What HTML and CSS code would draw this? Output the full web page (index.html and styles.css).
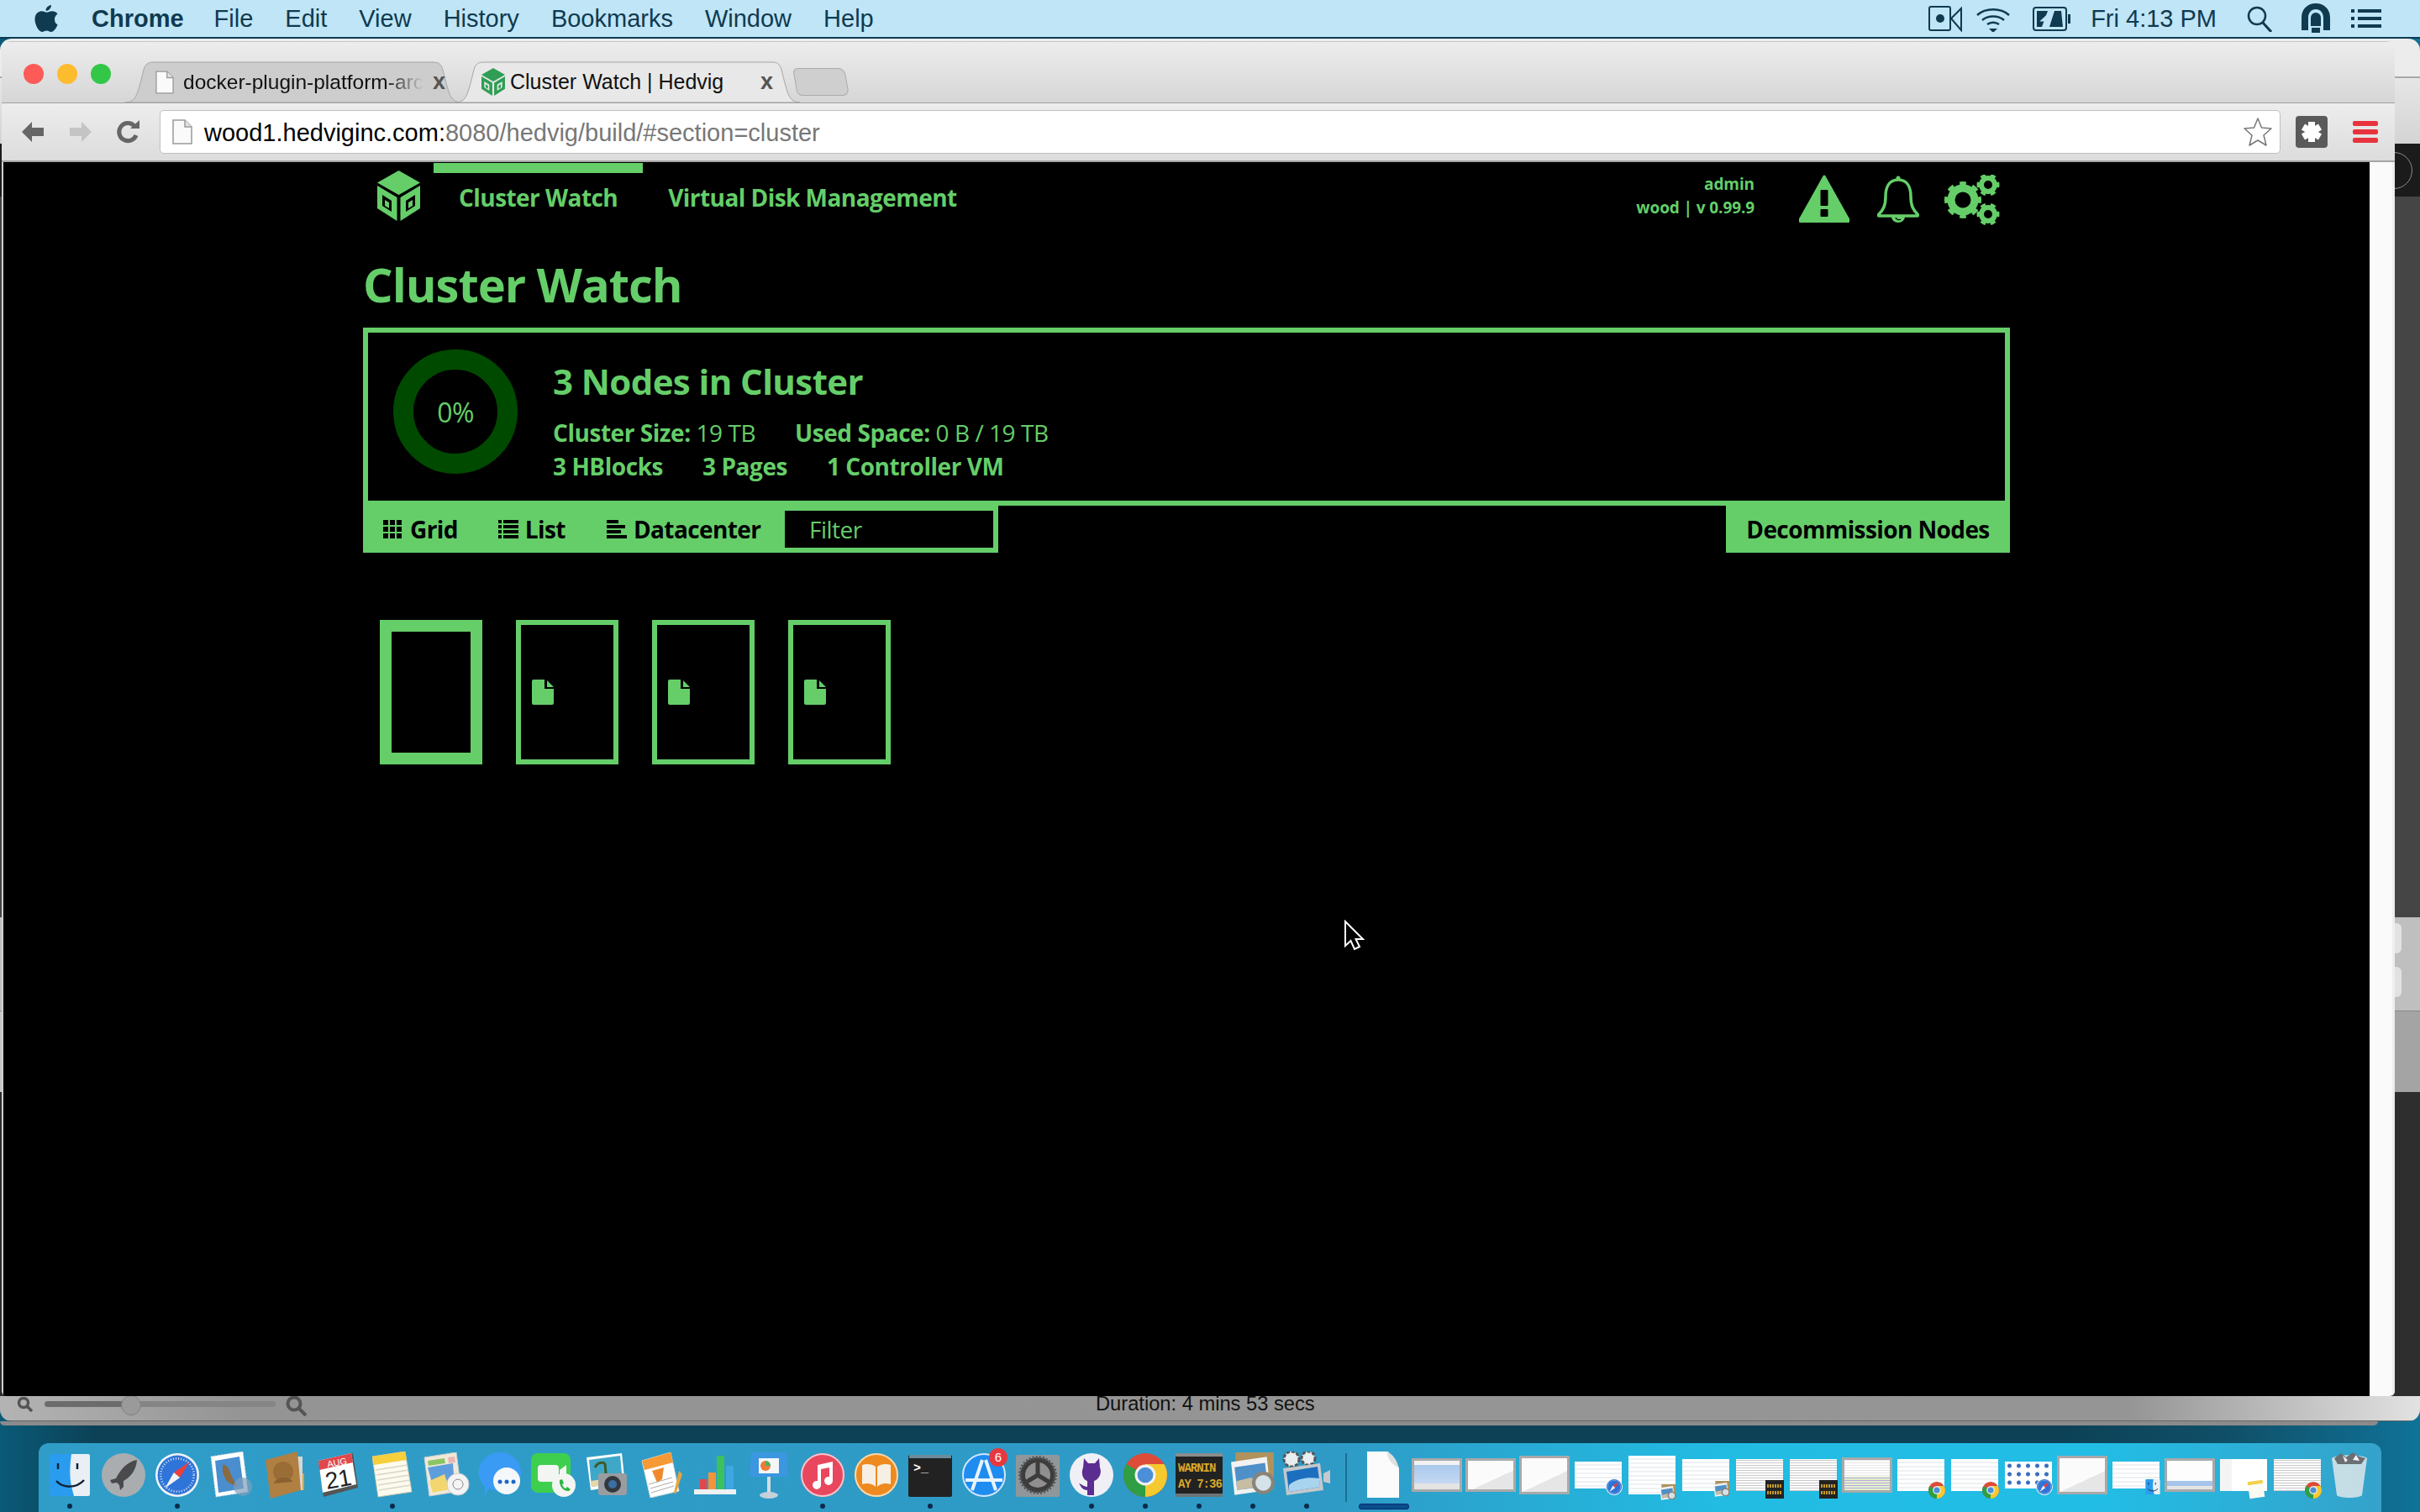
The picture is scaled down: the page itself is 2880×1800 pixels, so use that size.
FILE: index.html
```html
<!DOCTYPE html>
<html lang="en">

<head>
    <meta charset="UTF-8">
    <title>Cluster Watch | Hedvig</title>
    <link rel="stylesheet" href="styles.css">
</head>

<body>
    <!-- shared icons -->
    <svg class="defs" width="0" height="0">
        <symbol id="hedvig" viewBox="0 0 51 60">
            <path d="M25.5 0L51 14.5 25.5 29 0 14.5z" />
            <path fill-rule="evenodd" d="M0 18L23.5 32V60L0 45zM6 29V42L17 49V36z" />
            <path fill-rule="evenodd" d="M51 18L27.5 32V60L51 45zM45 29V42L34 49V36z" />
            <path d="M9 35L14 38V45L9 42zM42 35L37 38V45L42 42z" />
        </symbol>
        <symbol id="page" viewBox="0 0 24 30">
            <path d="M1 1H15L23 9V29H1z" fill="#fafafa" stroke="#9a9a9a" stroke-width="1.5" />
            <path d="M15 1V9H23" fill="#e4e4e4" stroke="#9a9a9a" stroke-width="1.5" />
        </symbol>
        <symbol id="chrome" viewBox="0 0 50 50">
            <circle cx="25" cy="25" r="25" fill="#dd4b39" />
            <path d="M25 25L3.4 12.5A25 25 0 0 0 25 50z" fill="#2f9e44" />
            <path d="M25 25V50A25 25 0 0 0 46.6 12.5H25z" fill="#f6c92f" />
            <circle cx="25" cy="25" r="12" fill="#f1f1f1" />
            <circle cx="25" cy="25" r="9" fill="#4c8fd8" />
        </symbol>
        <symbol id="safari" viewBox="0 0 50 50">
            <circle cx="25" cy="25" r="25" fill="#eef3f7" />
            <circle cx="25" cy="25" r="22.5" fill="#2f74d8" />
            <circle cx="25" cy="25" r="19" fill="none" stroke="#cfe2f8" stroke-width="2.5" stroke-dasharray="1 2" />
            <path d="M39 10L21 22 28 28z" fill="#ef3e3a" />
            <path d="M11 40L21 22 28 28z" fill="#f4f4f4" />
        </symbol>
        <symbol id="finder" viewBox="0 0 50 52">
            <rect x="1" y="1" width="48" height="50" rx="2" fill="#2a9cf0" />
            <path d="M27 1H47a2 2 0 0 1 2 2V49a2 2 0 0 1-2 2H30C27 38 23 30 27 1z" fill="#e9eff4" />
            <path d="M11 12V19M34 12V19" stroke="#123" stroke-width="2.5" />
            <path d="M9 33C17 42 33 42 42 32" fill="none" stroke="#123" stroke-width="2.5" />
        </symbol>
        <symbol id="preview" viewBox="0 0 52 54">
            <rect x="6" y="1" width="44" height="42" fill="#b0925c" />
            <path d="M1 12L42 6 46 44 5 50z" fill="#f2f2f2" />
            <path d="M5 18L40 13 43 40 8 44z" fill="#4f90c8" />
            <path d="M7 34L24 30 40 40 8 44z" fill="#c6bda4" />
            <circle cx="38" cy="36" r="13" fill="#8a8478" />
            <circle cx="38" cy="36" r="9" fill="#d6e2ea" />
        </symbol>
        <symbol id="console-mini" viewBox="0 0 22 22">
            <rect width="22" height="22" fill="#222" />
            <path d="M2 7H20M2 15H20" stroke="#c89a2a" stroke-width="4" stroke-dasharray="2 1" />
        </symbol>
    </svg>

    <div class="screen">

        <header class="menubar">
            <nav class="menu-left">
                <svg class="apple" width="30" height="32" viewBox="0 0 30 32">
                    <path d="M21 0c.3 3-2.8 7-6.4 6.8C14.200 3.600 17.600.3 21 0zM25 17c0-3.400 2-5.300 3.600-6.500C27 8 24 7.200 22 7.200c-2.500 0-4.700 1.500-6.200 1.500S11.800 7.200 9.500 7.200C5.500 7.300 1.500 10.500 1.500 17c0 6.500 4.700 15 8.500 15 1.800 0 3.300-1.400 5.500-1.400s3.400 1.400 5.500 1.400c3.300 0 6.500-5.500 7.500-8.700-2.300-1-3.500-3.200-3.500-6.300z" />
                </svg>
                <span class="menu-app">Chrome</span>
                <span>File</span>
                <span>Edit</span>
                <span>View</span>
                <span>History</span>
                <span>Bookmarks</span>
                <span>Window</span>
                <span>Help</span>
            </nav>
            <div class="menu-right">
                <svg class="status-camera" width="40" height="32" viewBox="0 0 40 32">
                    <rect x="1" y="2" width="25" height="28" rx="2" fill="none" stroke="#0f3a50" stroke-width="2" />
                    <circle cx="14" cy="16" r="5" fill="#0f3a50" />
                    <path d="M27 16L39 4V30z" fill="none" stroke="#0f3a50" stroke-width="2" />
                </svg>
                <svg class="status-wifi" width="42" height="32" viewBox="0 0 42 32">
                    <path d="M2 12C12 3 30 3 40 12M8 18C15 12 27 12 34 18M14 23C18 20 24 20 28 23" fill="none" stroke="#0f3a50" stroke-width="2.500" />
                    <path d="M16 28H26L21 33z" fill="#0f3a50" />
                </svg>
                <svg class="status-battery" width="46" height="32" viewBox="0 0 46 32">
                    <rect x="1" y="3" width="39" height="27" rx="3" fill="none" stroke="#0f3a50" stroke-width="2" />
                    <path d="M5 7H18L11 26H5zM34 7H26L20 26H36z" fill="#0f3a50" />
                    <path d="M26 5L12 18H20L16 28" fill="none" stroke="#bfe5f6" stroke-width="3" />
                    <rect x="42" y="11" width="3" height="11" fill="#0f3a50" />
                </svg>
                <span class="clock">Fri 4:13 PM</span>
                <svg class="status-search" width="30" height="32" viewBox="0 0 30 32">
                    <circle cx="12" cy="13" r="10" fill="none" stroke="#0f3a50" stroke-width="2.500" />
                    <path d="M19 21L29 32" stroke="#0f3a50" stroke-width="3" />
                </svg>
                <svg class="status-tunnel" width="34" height="36" viewBox="0 0 34 36">
                    <path fill-rule="evenodd" d="M0 32V17C0 6 8 0 17 0s17 6 17 17V32H26V17C26 11 22 7 17 7S8 11 8 17V32z" fill="#0f3a50" />
                    <path d="M11 27V17a6 6 0 0 1 12 0V27z" fill="#0f3a50" />
                    <rect x="12" y="29" width="10" height="6" fill="#0f3a50" />
                </svg>
                <svg class="status-list" width="36" height="28" viewBox="0 0 36 28">
                    <path d="M0 3H4V7H0zM8 3H36V7H8zM0 12H4V16H0zM8 12H36V16H8zM0 21H4V25H0zM8 21H36V25H8z" fill="#0f3a50" />
                </svg>
            </div>
        </header>

        <div class="desktop">

            <!-- window behind the browser -->
            <div class="backwin">
                <div class="band band-title"></div>
                <div class="band band-tools"></div>
                <div class="band band-dark"><span class="ring"></span></div>
                <div class="band band-grey"></div>
                <div class="band band-pills"><span class="pill"></span><span class="pill"></span></div>
                <div class="band band-light"></div>
                <div class="band band-deep"></div>
                <div class="backwin-foot">
                    <svg class="zoom-small" width="20" height="18" viewBox="0 0 20 18">
                        <circle cx="8" cy="7" r="5.500" fill="none" stroke="#555" stroke-width="3.500" />
                        <path d="M12 11L18 17" stroke="#555" stroke-width="3.500" />
                    </svg>
                    <div class="slider"><span class="slider-knob"></span></div>
                    <svg class="zoom-big" width="26" height="24" viewBox="0 0 26 24">
                        <circle cx="10" cy="9" r="7.500" fill="none" stroke="#555" stroke-width="4" />
                        <path d="M16 15L24 23" stroke="#555" stroke-width="4" />
                    </svg>
                    <span class="duration">Duration: 4 mins 53 secs</span>
                </div>
            </div>
            <div class="backwin-edge"></div>

            <!-- browser -->
            <div class="browser">
                <div class="titlebar">
                    <div class="lights">
                        <span class="light light-red"></span>
                        <span class="light light-yellow"></span>
                        <span class="light light-green"></span>
                    </div>
                    <div class="tabs">
                        <div class="tab tab-back">
                            <svg class="tab-shape" viewBox="0 0 400 49" preserveAspectRatio="none">
                                <path d="M0 49C12 49 14 40 18 26L22 10C24 3 27 1 34 1H366C373 1 376 3 378 10L382 26C386 40 388 49 400 49z" fill="#cdcdcd" stroke="#a6a6a6" />
                            </svg>
                            <svg class="tab-icon" width="22" height="28"><use href="#page" /></svg>
                            <span class="tab-label tab-label-fade">docker-plugin-platform-arc</span>
                            <span class="tab-close">x</span>
                        </div>
                        <div class="tab tab-active">
                            <svg class="tab-shape" viewBox="0 0 410 49" preserveAspectRatio="none">
                                <path d="M0 49C12 49 14 40 18 26L22 10C24 3 27 1 34 1H376C383 1 386 3 388 10L392 26C396 40 398 49 410 49z" fill="#e8e8e8" stroke="#a6a6a6" />
                            </svg>
                            <svg class="tab-favicon" width="28" height="33"><use href="#hedvig" /></svg>
                            <span class="tab-label">Cluster Watch | Hedvig</span>
                            <span class="tab-close">x</span>
                        </div>
                        <span class="tab-new"></span>
                    </div>
                </div>

                <div class="toolbar">
                    <svg class="nav-btn" width="30" height="30" viewBox="0 0 30 30">
                        <path d="M14 3L2 15 14 27V20H28V10H14z" fill="#666" />
                    </svg>
                    <svg class="nav-btn" width="30" height="30" viewBox="0 0 30 30">
                        <path d="M16 3L28 15 16 27V20H2V10H16z" fill="#c4c4c4" />
                    </svg>
                    <svg class="nav-btn" width="30" height="30" viewBox="0 0 30 30">
                        <path d="M24 19A10.500 10.500 0 1 1 22 8" fill="none" stroke="#666" stroke-width="5" />
                        <path d="M17 11H28V1z" fill="#666" />
                    </svg>
                    <div class="urlbar">
                        <svg class="url-icon" width="24" height="30"><use href="#page" /></svg>
                        <span class="url"><span class="url-host">wood1.hedviginc.com:</span>8080/hedvig/build/#section=cluster</span>
                        <svg class="url-star" width="36" height="36" viewBox="0 0 36 36">
                            <path d="M18 2L22.500 13 34 14 25 22 28 34 18 28 8 34 11 22 2 14 13.500 13z" fill="#fff" stroke="#777" stroke-width="1.500" stroke-linejoin="round" />
                        </svg>
                    </div>
                    <span class="ext-btn">
                        <svg width="26" height="28" viewBox="0 0 26 28">
                            <path d="M13 2V26M3 8L23 20M23 8L3 20" stroke="#fff" stroke-width="8" />
                        </svg>
                    </span>
                    <span class="menu-btn"><i></i><i></i><i></i></span>
                </div>

                <div class="content">
                    <div class="viewport">
                        <div class="app">
                            <div class="topnav">
                                <svg class="logo" width="51" height="60"><use href="#hedvig" /></svg>
                                <a class="nav-item nav-item-active">Cluster Watch</a>
                                <a class="nav-item">Virtual Disk Management</a>
                                <div class="nav-right">
                                    <div class="user-info">
                                        <div>admin</div>
                                        <div>wood | v 0.99.9</div>
                                    </div>
                                    <svg class="alert-icon" width="60" height="57" viewBox="0 0 60 57">
                                        <path d="M30 2L58 52a3 3 0 0 1-3 5H5a3 3 0 0 1-3-5z" stroke="#65ce69" stroke-width="3" stroke-linejoin="round" fill="#65ce69" />
                                        <rect x="25.500" y="18" width="9" height="19" rx="1" fill="#000" />
                                        <rect x="25.500" y="41" width="9" height="9" rx="1" fill="#000" />
                                    </svg>
                                    <svg class="bell-icon" width="50" height="56" viewBox="0 0 50 56">
                                        <circle cx="25" cy="3" r="2.500" fill="#65ce69" />
                                        <path d="M25 5C14 5 10 14 10 25C10 36 7 41 2 46Q0 48 3 48H47Q50 48 48 46C43 41 40 36 40 25C40 14 36 5 25 5z" fill="none" stroke="#65ce69" stroke-width="3.500" />
                                        <path d="M17 49a8 7 0 0 0 16 0z" fill="#65ce69" />
                                        <path d="M22 50a4 4 0 0 0 6 2" fill="none" stroke="#000" stroke-width="1.200" />
                                    </svg>
                                    <svg class="gears-icon" width="66" height="60" viewBox="0 0 66 60">
                                        <g fill="none" stroke="#65ce69">
                                            <circle cx="22" cy="30" r="14" stroke-width="9" />
                                            <circle cx="22" cy="30" r="19" stroke-width="6" pathLength="80" stroke-dasharray="5 5" stroke-dashoffset="2.500" />
                                            <circle cx="52" cy="12" r="8" stroke-width="6" />
                                            <circle cx="52" cy="12" r="11.500" stroke-width="4" pathLength="60" stroke-dasharray="5 5" stroke-dashoffset="2.500" />
                                            <circle cx="52" cy="47" r="8" stroke-width="6" />
                                            <circle cx="52" cy="47" r="11.500" stroke-width="4" pathLength="60" stroke-dasharray="5 5" stroke-dashoffset="2.500" />
                                        </g>
                                    </svg>
                                </div>
                            </div>

                            <h1>Cluster Watch</h1>

                            <section class="summary">
                                <div class="donut">0%</div>
                                <div class="summary-text">
                                    <h2>3 Nodes in Cluster</h2>
                                    <div class="stat-row">
                                        <span><b>Cluster Size:</b> 19 TB</span>
                                        <span><b>Used Space:</b> 0 B / 19 TB</span>
                                    </div>
                                    <div class="stat-row">
                                        <span><b>3 HBlocks</b></span>
                                        <span><b>3 Pages</b></span>
                                        <span><b>1 Controller VM</b></span>
                                    </div>
                                </div>
                            </section>

                            <div class="controls">
                                <div class="views">
                                    <a class="view-btn view-grid">
                                        <svg width="22" height="22" viewBox="0 0 22 22">
                                            <path d="M0 0H6V6H0zM8 0H14V6H8zM16 0H22V6H16zM0 8H6V14H0zM8 8H14V14H8zM16 8H22V14H16zM0 16H6V22H0zM8 16H14V22H8zM16 16H22V22H16z" />
                                        </svg>
                                        Grid
                                    </a>
                                    <a class="view-btn view-list">
                                        <svg width="24" height="22" viewBox="0 0 24 22">
                                            <path d="M0 0H4V4H0zM6 0H24V4H6zM0 6H4V10H0zM6 6H24V10H6zM0 12H4V16H0zM6 12H24V16H6zM0 18H4V22H0zM6 18H24V22H6z" />
                                        </svg>
                                        List
                                    </a>
                                    <a class="view-btn view-dc">
                                        <svg width="24" height="22" viewBox="0 0 24 22">
                                            <path d="M0 0H14V4H0zM0 6H22V10H0zM0 12H17V16H0zM0 18H24V22H0z" />
                                        </svg>
                                        Datacenter
                                    </a>
                                    <input class="filter" type="text" placeholder="Filter">
                                </div>
                                <a class="decommission">Decommission Nodes</a>
                            </div>

                            <div class="tiles">
                                <div class="tile tile-selected"></div>
                                <div class="tile">
                                    <svg class="file-icon" width="26" height="30" viewBox="0 0 26 30"><path d="M2 0H15V11H26V28a2 2 0 0 1-2 2H2a2 2 0 0 1-2-2V2a2 2 0 0 1 2-2zM18 1L26 9H18z" /></svg>
                                </div>
                                <div class="tile">
                                    <svg class="file-icon" width="26" height="30" viewBox="0 0 26 30"><path d="M2 0H15V11H26V28a2 2 0 0 1-2 2H2a2 2 0 0 1-2-2V2a2 2 0 0 1 2-2zM18 1L26 9H18z" /></svg>
                                </div>
                                <div class="tile">
                                    <svg class="file-icon" width="26" height="30" viewBox="0 0 26 30"><path d="M2 0H15V11H26V28a2 2 0 0 1-2 2H2a2 2 0 0 1-2-2V2a2 2 0 0 1 2-2zM18 1L26 9H18z" /></svg>
                                </div>
                            </div>
                        </div>
                    </div>
                    <div class="scrollbar"></div>
                </div>
            </div>

            <!-- mouse pointer -->
            <svg class="pointer" width="26" height="38" viewBox="0 0 26 38">
                <path d="M2 2V31L8.500 25 13 35 19 32 14.500 23H23z" fill="#000" stroke="#fff" stroke-width="2" />
            </svg>
        </div>

        <footer class="dock">
            <div class="slot is-running">
                <svg width="50" height="52"><use href="#finder" /></svg>
            </div>
            <div class="slot">
                <svg width="52" height="52" viewBox="0 0 52 52">
                    <circle cx="26" cy="26" r="26" fill="#a9adb0" />
                    <path d="M42 8C30 10 22 20 17 30L10 32 12 36 18 35 21 38 22 44 26 40 26 33C35 28 41 20 42 8z" fill="#4a4a4c" />
                </svg>
            </div>
            <div class="slot is-running">
                <svg width="52" height="52"><use href="#safari" /></svg>
            </div>
            <div class="slot">
                <svg width="52" height="56" viewBox="0 0 52 56">
                    <path d="M2 6L40 0 46 48 8 54z" fill="#fff" stroke="#d8d8d8" stroke-dasharray="2 2" />
                    <path d="M7 11L36 6 41 44 11 49z" fill="#4a8ed0" />
                    <path d="M16 16C22 15 24 22 26 28L33 42 25 38C20 36 18 30 16 24z" fill="#8a6a3e" />
                    <circle cx="40" cy="42" r="11" fill="#7f9fbc" opacity=".7" />
                </svg>
            </div>
            <div class="slot">
                <svg width="50" height="56" viewBox="0 0 50 56">
                    <path d="M40 6H46V46H40z" fill="#d6d6d6" />
                    <path d="M46 26H48V46H46z" fill="#e6a020" />
                    <path d="M2 10L40 0 44 46 8 56z" fill="#b07f42" />
                    <circle cx="23" cy="24" r="12" fill="#9a6d36" />
                    <path d="M12 38C14 29 32 29 34 36z" fill="#8a6230" />
                </svg>
            </div>
            <div class="slot">
                <svg width="50" height="54" viewBox="0 0 50 54">
                    <path d="M1 12L42 1 48 42 7 53z" fill="#555" />
                    <path d="M1 10L40 1 46 38 6 48z" fill="#fff" />
                    <path d="M1 10L40 1 42 12 2 21z" fill="#e0484c" />
                    <text class="cal-month" x="12" y="18" transform="rotate(-10 12 18)">AUG</text>
                    <text class="cal-day" x="11" y="44" transform="rotate(-10 11 44)">21</text>
                </svg>
            </div>
            <div class="slot is-running">
                <svg width="48" height="56" viewBox="0 0 48 56">
                    <path d="M0 6L39 0 47 48 7 54z" fill="#fdfbee" stroke="#c8c6b0" />
                    <path d="M0 6L39 0 41 10 2 16z" fill="#f6cf3c" />
                    <path d="M4 22L42 16M5 28L43 22M6 34L44 28M7 40L45 34M8 46L46 40" stroke="#d8d6c8" stroke-width="1.500" />
                </svg>
            </div>
            <div class="slot">
                <svg width="56" height="54" viewBox="0 0 56 54">
                    <path d="M2 6L40 0 46 46 8 52z" fill="#efe9da" stroke="#ccc" />
                    <path d="M6 10L26 7 27 13 7 16z" fill="#8cc563" />
                    <path d="M30 6L38 5 39 12 31 13z" fill="#eab5b5" />
                    <path d="M6 18L36 13 38 40H12z" fill="#5f9edc" />
                    <path d="M8 34L26 26 32 44 12 48z" fill="#f3d66e" />
                    <circle cx="42" cy="38" r="13" fill="#f4f4f4" stroke="#ccc" />
                    <circle cx="42" cy="38" r="6" fill="none" stroke="#888" />
                </svg>
            </div>
            <div class="slot">
                <svg width="52" height="54" viewBox="0 0 52 54">
                    <path d="M26 0a25 24 0 0 1 12 45L36 48C28 50 20 46 14 42L8 52C8 46 8 42 7 40A25 24 0 0 1 26 0z" fill="#3a9bf5" />
                    <circle cx="34" cy="34" r="16" fill="#f4f8fb" />
                    <circle cx="26" cy="35" r="2.500" fill="#1f66c8" />
                    <circle cx="34" cy="35" r="2.500" fill="#1f66c8" />
                    <circle cx="42" cy="35" r="2.500" fill="#1f66c8" />
                </svg>
            </div>
            <div class="slot">
                <svg width="54" height="52" viewBox="0 0 54 52">
                    <rect x="0" width="47" height="47" rx="8" fill="#3fcf4e" />
                    <rect x="8" y="14" width="25" height="20" rx="4" fill="#f2f5f2" />
                    <path d="M34 20L42 14V34L34 28z" fill="#f2f5f2" />
                    <circle cx="39" cy="38" r="14" fill="#f2f5f2" />
                    <path d="M34 32l3-1 2 5-2 1c1 3 2 4 4 5l2-2 4 3-2 2c-6 1-12-6-11-13z" fill="#2cb544" />
                </svg>
            </div>
            <div class="slot">
                <svg width="50" height="52" viewBox="0 0 50 52">
                    <path d="M0 5L42 0 46 38 5 44z" fill="#fff" />
                    <path d="M3 8L40 3 43 35 6 40z" fill="#3fa7c8" />
                    <path d="M22 12C16 10 12 13 10 17M22 12L24 36" stroke="#3b5b2a" stroke-width="3" fill="none" />
                    <path d="M5 33L42 28V35L6 40z" fill="#e6d7a8" />
                    <rect x="14" y="24" width="34" height="26" rx="3" fill="#9a9ca0" />
                    <circle cx="31" cy="37" r="10" fill="#33383e" />
                    <circle cx="31" cy="37" r="5" fill="#3b6fa5" />
                </svg>
            </div>
            <div class="slot">
                <svg width="50" height="54" viewBox="0 0 50 54">
                    <path d="M2 10L36 0 46 46 12 54z" fill="#fff" stroke="#ddd" />
                    <path d="M2 10L36 0 39 12 5 21z" fill="#f59a34" />
                    <path d="M14 22L28 18 26 32 20 36z" fill="#ee8a2d" />
                    <path d="M10 38L38 30M12 43L39 35M13 48L40 40" stroke="#aaa" />
                    <path d="M46 22L40 48 42 50 50 26z" fill="#e7a33a" />
                </svg>
            </div>
            <div class="slot">
                <svg width="52" height="50" viewBox="0 0 52 50">
                    <path d="M1 48L4 42H48L51 48z" fill="#c6cfd6" />
                    <rect x="1" y="42" width="50" height="6" fill="#eef0f2" />
                    <rect x="8" y="30" width="8" height="12" fill="#e0484c" />
                    <rect x="18" y="22" width="9" height="20" fill="#f2953a" />
                    <rect x="28" y="2" width="9" height="40" fill="#3cc25c" />
                    <rect x="39" y="14" width="9" height="28" fill="#3ea6e0" />
                </svg>
            </div>
            <div class="slot">
                <svg width="48" height="56" viewBox="0 0 48 56">
                    <path d="M3 1H45L47 30H1z" fill="#3b97e0" />
                    <rect x="12" y="8" width="24" height="18" fill="#f4f6f8" />
                    <circle cx="20" cy="17" r="6" fill="#ef7a3a" />
                    <path d="M20 17V11A6 6 0 0 1 26 17z" fill="#46b35a" />
                    <rect x="22" y="30" width="4" height="20" fill="#d6dde2" />
                    <ellipse cx="24" cy="52" rx="11" ry="4" fill="#c6d0d8" />
                </svg>
            </div>
            <div class="slot is-running">
                <svg width="52" height="52" viewBox="0 0 52 52">
                    <circle cx="26" cy="26" r="26" fill="#e9475e" />
                    <circle cx="26" cy="26" r="25" fill="none" stroke="#f2c7cd" stroke-width="2" />
                    <path d="M20 14L38 10V33a5 5 0 1 1-4-5V17L24 19V38a5 5 0 1 1-4-5z" fill="#fff" />
                </svg>
            </div>
            <div class="slot">
                <svg width="52" height="52" viewBox="0 0 52 52">
                    <circle cx="26" cy="26" r="26" fill="#ef8a1e" />
                    <circle cx="26" cy="26" r="25" fill="none" stroke="#f5d9b0" stroke-width="2" />
                    <path d="M9 14C15 12 21 13 25 16V40C21 36 15 35 9 37zM43 14C37 12 31 13 27 16V40C31 36 37 35 43 37z" fill="#f7efe4" />
                </svg>
            </div>
            <div class="slot is-running">
                <svg width="52" height="52" viewBox="0 0 52 52">
                    <rect y="2" width="52" height="50" rx="2" fill="#222" />
                    <rect x="1" y="2" width="50" height="4" fill="#6c8a98" />
                    <text class="term-text" x="6" y="22">&gt;_</text>
                </svg>
            </div>
            <div class="slot">
                <svg width="52" height="52" viewBox="0 0 52 52">
                    <circle cx="26" cy="26" r="26" fill="#1f8cf0" />
                    <circle cx="26" cy="26" r="25" fill="none" stroke="#cfe7fb" stroke-width="2" />
                    <path d="M28 8L40 44M24 8L12 44M4 32H48" stroke="#e9f4fd" stroke-width="4" />
                </svg>
                <span class="badge">6</span>
            </div>
            <div class="slot">
                <svg width="52" height="52" viewBox="0 0 52 52">
                    <rect y="2" width="52" height="50" rx="2" fill="#90979b" />
                    <circle cx="26" cy="26" r="21" fill="#3c3c3c" stroke="#555" stroke-width="4" stroke-dasharray="2 2" />
                    <circle cx="26" cy="26" r="15" fill="#8f8f8f" />
                    <path d="M26 26V11M26 26L13 34M26 26L39 34" stroke="#3c3c3c" stroke-width="5" />
                </svg>
            </div>
            <div class="slot is-running">
                <svg width="52" height="52" viewBox="0 0 52 52">
                    <circle cx="26" cy="26" r="26" fill="#f1eff6" />
                    <path d="M17 6L22 12H30L35 6 36 17C39 24 34 32 29 33V50H21V44C14 44 13 38 11 36 15 37 17 40 21 40V33C16 32 13 24 16 17z" fill="#5c2d91" />
                </svg>
            </div>
            <div class="slot is-running">
                <svg width="52" height="52"><use href="#chrome" /></svg>
            </div>
            <div class="slot is-running">
                <svg width="56" height="52" viewBox="0 0 56 52">
                    <rect width="56" height="52" rx="2" fill="#222" />
                    <rect width="56" height="4" fill="#8c8c8c" />
                    <rect y="48" width="56" height="4" fill="#6c7478" />
                    <text x="3" y="22" class="warn-text">WARNIN</text>
                    <text x="3" y="41" class="warn-text">AY 7:36</text>
                </svg>
            </div>
            <div class="slot is-running">
                <svg width="54" height="56"><use href="#preview" /></svg>
            </div>
            <div class="slot is-running">
                <svg width="60" height="56" viewBox="0 0 60 56">
                    <circle cx="12" cy="9" r="9" fill="#e8edf0" stroke="#555" stroke-dasharray="4 2" stroke-width="3" />
                    <circle cx="32" cy="8" r="8" fill="#e8edf0" stroke="#555" stroke-dasharray="4 2" stroke-width="3" />
                    <path d="M2 20L46 14 50 46 6 52z" fill="#c5c8cc" />
                    <path d="M6 24L43 18 46 42 9 48z" fill="#1c6fbf" />
                    <path d="M9 40C18 32 32 30 45 32L46 42 9 48z" fill="#a8d4ef" />
                    <path d="M50 26L58 22V38L50 36z" fill="#c5c8cc" />
                </svg>
            </div>

            <span class="dock-sep"></span>

            <div class="slot slot-doc">
                <svg width="40" height="56" viewBox="0 0 40 56">
                    <path d="M1 0H26L39 20V55H1z" fill="#fbfbfb" />
                    <path d="M24 0C26 8 28 14 39 20C36 10 32 3 24 0z" fill="#dfdfdf" />
                </svg>
            </div>
            <div class="slot"><div class="thumb thumb-win thumb-sky"></div></div>
            <div class="slot"><div class="thumb thumb-win"></div></div>
            <div class="slot"><div class="thumb thumb-win thumb-tall"></div></div>
            <div class="slot"><div class="thumb thumb-doc thumb-short"><svg class="thumb-badge" width="20" height="22"><use href="#safari" /></svg></div></div>
            <div class="slot"><div class="thumb thumb-doc thumb-tall"><svg class="thumb-badge" width="20" height="22"><use href="#preview" /></svg></div></div>
            <div class="slot"><div class="thumb thumb-doc"><svg class="thumb-badge" width="20" height="22"><use href="#preview" /></svg></div></div>
            <div class="slot"><div class="thumb thumb-doc thumb-text"><svg class="thumb-badge" width="22" height="22"><use href="#console-mini" /></svg></div></div>
            <div class="slot"><div class="thumb thumb-doc thumb-text"><svg class="thumb-badge" width="22" height="22"><use href="#console-mini" /></svg></div></div>
            <div class="slot"><div class="thumb thumb-win thumb-lilac"></div></div>
            <div class="slot"><div class="thumb thumb-doc"><svg class="thumb-badge" width="20" height="20"><use href="#chrome" /></svg></div></div>
            <div class="slot"><div class="thumb thumb-doc"><svg class="thumb-badge" width="20" height="20"><use href="#chrome" /></svg></div></div>
            <div class="slot"><div class="thumb thumb-doc thumb-short thumb-swatches"><svg class="thumb-badge" width="20" height="22"><use href="#safari" /></svg></div></div>
            <div class="slot"><div class="thumb thumb-win thumb-tall"></div></div>
            <div class="slot"><div class="thumb thumb-doc thumb-short"><svg class="thumb-badge" width="18" height="22"><use href="#finder" /></svg></div></div>
            <div class="slot"><div class="thumb thumb-win thumb-blue"></div></div>
            <div class="slot"><div class="thumb thumb-doc thumb-notes"><span class="thumb-note"></span></div></div>
            <div class="slot"><div class="thumb thumb-doc thumb-text"><svg class="thumb-badge" width="20" height="20"><use href="#chrome" /></svg></div></div>
            <div class="slot slot-trash">
                <svg width="44" height="56" viewBox="0 0 44 56">
                    <path d="M1 8C8 3 36 3 43 8L37 52C34 56 10 56 7 52z" fill="#dfe6e9" opacity=".85" />
                    <path d="M4 8L12 2 18 7 26 1 34 6 41 8 36 15H8z" fill="#6a6f73" />
                    <path d="M14 5L20 10 17 13zM30 4L34 11 26 10z" fill="#f4f4f4" />
                </svg>
            </div>
        </footer>
    </div>
</body>

</html>
```

FILE: styles.css
```css
html,
body {
    margin: 0;
    padding: 0;
    background: #000;
}

.defs {
    position: absolute;
}

.screen {
    width: 2880px;
    height: 1800px;
    display: flex;
    flex-direction: column;
    overflow: hidden;
    font-family: "Liberation Sans", Arial, sans-serif;
    background: linear-gradient(90deg, #0a5a78 0, #0c4156 4%, #0c4156 85%, #104f68 92%, #0f7398 100%);
}

/* mac menu bar */
.menubar {
    height: 44px;
    flex: none;
    display: flex;
    justify-content: space-between;
    align-items: center;
    background: #bfe5f6;
    border-bottom: 2px solid #0d3b52;
    color: #0f3a50;
    font-size: 29px;
}

.menu-left {
    display: flex;
    align-items: center;
    gap: 38px;
    padding-left: 40px;
}

.apple {
    fill: #0f3a50;
    margin-right: 1px;
}

.menu-app {
    font-weight: bold;
    margin-right: -2px;
}

.menu-right {
    display: flex;
    align-items: center;
    padding-right: 46px;
}

.status-camera {
    margin-right: 16px;
}

.status-wifi {
    margin-right: 26px;
}

.status-battery {
    margin-right: 23px;
}

.clock {
    margin-right: 36px;
}

.status-search {
    margin-right: 35px;
}

.status-tunnel {
    margin-right: 25px;
}

/* desktop windows */
.desktop {
    flex: 1;
    position: relative;
}

.backwin {
    position: absolute;
    left: 0;
    top: 0;
    width: 2880px;
    height: 1646px;
    display: flex;
    flex-direction: column;
    overflow: hidden;
    border-radius: 14px;
}

.backwin-edge {
    position: absolute;
    left: 0;
    top: 1646px;
    width: 2830px;
    height: 5px;
    background: #8b8b8b;
    border-radius: 0 0 8px 8px;
}

.band {
    flex: none;
}

.band-title {
    height: 45px;
    background: #ececec;
    border-bottom: 2px solid #a8a8a8;
}

.band-tools {
    height: 78px;
    background: linear-gradient(#e6e6e6, #d4d4d4);
}

.band-dark {
    height: 63px;
    background: #1b1b1b;
    display: flex;
    justify-content: flex-end;
    align-items: center;
    padding-right: 9px;
}

.ring {
    width: 42px;
    height: 42px;
    border: 1px solid #8a8a8a;
    border-radius: 50%;
}

.band-grey {
    height: 858px;
    background: #454545;
}

.band-pills {
    height: 112px;
    background: #bfbfbf;
    display: flex;
    flex-direction: column;
    align-items: flex-end;
    gap: 16px;
    padding: 7px 22px 0 0;
    box-sizing: border-box;
    border-bottom: 1px solid #888;
}

.pill {
    width: 80px;
    height: 36px;
    background: #e2e2e2;
    border-radius: 6px;
}

.band-light {
    height: 96px;
    background: linear-gradient(90deg, #c6c6c6, #a4a4a4);
}

.band-deep {
    flex: 1;
    background: #2e2e2e;
}

.backwin-foot {
    height: 30px;
    flex: none;
    display: flex;
    align-items: flex-start;
    background: linear-gradient(90deg, #b4b4b4 0, #949494 10%, #959595 88%, #e2e2e2 100%);
    border-bottom: 1px solid #666;
    box-sizing: border-box;
    padding-left: 20px;
}

.zoom-small {
    margin: 1px 13px 0 0;
}

.slider {
    width: 275px;
    height: 7px;
    margin: 6px 12px 0 0;
    background: linear-gradient(90deg, #6c6c6c 37%, #858585 37%);
    border-radius: 4px;
    position: relative;
}

.slider-knob {
    position: absolute;
    left: 91px;
    top: -7px;
    width: 22px;
    height: 22px;
    border-radius: 50%;
    background: #9a9a9a;
    border: 1px solid #808080;
}

.duration {
    margin: -7px 0 0 938px;
    font-size: 23.7px;
    color: #111;
    line-height: 32px;
}

.browser {
    position: absolute;
    left: 2px;
    top: 3px;
    width: 2848px;
    height: 1613px;
    display: flex;
    flex-direction: column;
    border-radius: 10px 10px 6px 6px;
    overflow: hidden;
}

.titlebar {
    height: 73px;
    flex: none;
    display: flex;
    background: linear-gradient(#ededed, #d6d6d6);
    border-top: 1px solid #c8c8c8;
    box-sizing: border-box;
}

.lights {
    display: flex;
    gap: 16px;
    padding: 26px 0 0 26px;
}

.light {
    width: 24px;
    height: 24px;
    border-radius: 50%;
}

.light-red {
    background: #fc5b57;
}

.light-yellow {
    background: #fdbb2e;
}

.light-green {
    background: #33c748;
}

.tabs {
    display: flex;
    align-items: flex-end;
    margin-left: 17px;
}

.tab {
    position: relative;
    height: 49px;
    display: flex;
    align-items: center;
    font-size: 25px;
    color: #111;
    box-sizing: border-box;
}

.tab-shape {
    position: absolute;
    left: 0;
    top: 0;
    width: 100%;
    height: 100%;
}

.tab-back {
    width: 400px;
    padding: 0 19px 0 36px;
}

.tab-active {
    width: 410px;
    margin-left: -7px;
    padding: 0 32px 0 31px;
}

.tab-icon,
.tab-favicon,
.tab-label,
.tab-close {
    position: relative;
}

.tab-icon {
    margin-right: 11px;
    flex: none;
}

.tab-favicon {
    fill: #2f9e54;
    margin-right: 6px;
    flex: none;
}

.tab-label {
    white-space: nowrap;
}

.tab-label-fade {
    font-size: 24.5px;
    -webkit-mask-image: linear-gradient(90deg, #000 84%, transparent 100%);
    mask-image: linear-gradient(90deg, #000 84%, transparent 100%);
}

.tab-close {
    margin-left: auto;
    font-size: 27px;
    font-weight: bold;
    color: #555;
}

.tab-new {
    width: 60px;
    height: 31px;
    margin: 0 0 8px -6px;
    background: #cfcfcf;
    border: 1px solid #aaa;
    border-radius: 6px 8px 8px 6px;
    transform: skewX(10deg);
}

.toolbar {
    height: 71px;
    flex: none;
    display: flex;
    align-items: center;
    gap: 27px;
    padding: 0 20px 0 22px;
    box-sizing: border-box;
    background: linear-gradient(#ededed, #dcdcdc);
    border-top: 1px solid #a0a0a0;
    border-bottom: 2px solid #a4a4a4;
}

.urlbar {
    flex: 1;
    height: 52px;
    margin-left: -5px;
    margin-right: -9px;
    display: flex;
    align-items: center;
    padding: 0 8px 0 14px;
    background: #fff;
    border: 1px solid #c0c0c0;
    border-radius: 5px;
    box-sizing: border-box;
}

.url-icon {
    margin-right: 14px;
}

.url {
    flex: 1;
    font-size: 29px;
    line-height: 34px;
    padding-top: 1px;
    color: #777;
}

.url-host {
    color: #000;
}

.ext-btn {
    width: 38px;
    height: 38px;
    background: #5a5a5a;
    border-radius: 4px;
    display: flex;
    align-items: center;
    justify-content: center;
}

.menu-btn {
    width: 30px;
    display: flex;
    flex-direction: column;
    gap: 4px;
    margin-left: 3px;
}

.menu-btn i {
    height: 6px;
    background: #e8323c;
    border-radius: 2px;
}

/* the Hedvig app */
.content {
    flex: 1;
    display: flex;
    min-height: 0;
    border-left: 2px solid #d0d0d0;
}

.viewport {
    flex: 1;
    background: #000;
    color: #65ce69;
    font-family: "Open Sans", Arial, sans-serif;
}

.scrollbar {
    width: 30px;
    flex: none;
    background: #fafafa;
    border-right: 3px solid #eee;
    box-sizing: border-box;
}

.app {
    width: 1960px;
    margin-left: 428px;
}

.topnav {
    height: 112px;
    display: flex;
    align-items: flex-start;
    padding-left: 17px;
    box-sizing: border-box;
}

.logo {
    fill: #65ce69;
    margin: 10px 16px 0 0;
}

.nav-item {
    padding: 0 30px;
    height: 74px;
    border-top: 12px solid transparent;
    margin-top: 1px;
    font-size: 28px;
    letter-spacing: -0.55px;
    font-weight: bold;
    line-height: 58px;
    box-sizing: border-box;
}

.nav-item-active {
    border-top-color: #65ce69;
}

.nav-right {
    margin-left: auto;
    display: flex;
    align-items: flex-start;
    padding-right: 12px;
}

.user-info {
    margin: 12px 53px 0 0;
    text-align: right;
    font-size: 19px;
    letter-spacing: -0.1px;
    font-weight: bold;
    line-height: 28px;
}

.alert-icon {
    margin: 15px 33px 0 0;
}

.bell-icon {
    margin: 16px 30px 0 0;
}

.gears-icon {
    margin-top: 15px;
}

h1 {
    margin: 0;
    height: 85px;
    font-size: 56px;
    letter-spacing: -1px;
    line-height: 66px;
    font-weight: bold;
}

.summary {
    height: 212px;
    display: flex;
    gap: 42px;
    padding: 20px 0 0 30px;
    border: 6px solid #65ce69;
    box-sizing: border-box;
}

.donut {
    width: 148px;
    height: 148px;
    flex: none;
    border: 24px solid #004a00;
    border-radius: 50%;
    box-sizing: border-box;
    display: flex;
    align-items: center;
    justify-content: center;
    font-size: 32px;
    letter-spacing: -0.5px;
}

.summary-text {
    padding-top: 11px;
    font-size: 28px;
    letter-spacing: -0.45px;
}

h2 {
    margin: 0 0 14px;
    font-size: 42px;
    letter-spacing: -0.6px;
    line-height: 54px;
    font-weight: bold;
}

.stat-row {
    display: flex;
    gap: 47px;
    line-height: 40px;
}

.controls {
    height: 56px;
    display: flex;
    justify-content: space-between;
    color: #000;
    font-size: 28px;
    letter-spacing: -0.6px;
    font-weight: bold;
}

.views {
    width: 756px;
    display: flex;
    align-items: center;
    background: #65ce69;
    padding: 0 6px 0 24px;
    box-sizing: border-box;
}

.view-btn {
    display: flex;
    align-items: center;
    gap: 10px;
}

.view-grid {
    margin-right: 48px;
}

.view-list {
    margin-right: 49px;
    gap: 8px;
}

.view-dc {
    gap: 8px;
}

.view-btn svg {
    fill: #000;
}

.filter {
    width: 248px;
    height: 44px;
    flex: none;
    margin-left: auto;
    padding: 0 0 0 29px;
    border: none;
    outline: none;
    background: #000;
    color: #65ce69;
    font-family: "Open Sans", Arial, sans-serif;
    font-size: 28px;
    letter-spacing: -0.5px;
    box-sizing: border-box;
}

.filter::placeholder {
    color: #65ce69;
    opacity: 1;
}

.decommission {
    width: 338px;
    background: #65ce69;
    text-align: center;
    line-height: 56px;
}

.tiles {
    display: flex;
    gap: 40px;
    padding: 80px 0 0 20px;
}

.tile {
    width: 122px;
    height: 172px;
    border: 6px solid #65ce69;
    box-sizing: border-box;
    display: flex;
    align-items: center;
    padding-left: 13px;
}

.tile-selected {
    border-width: 14px;
}

.file-icon {
    fill: #65ce69;
}

.pointer {
    position: absolute;
    left: 1599px;
    top: 1049px;
}

/* dock */
.dock {
    height: 82px;
    flex: none;
    margin: 0 46px;
    display: flex;
    padding-left: 5px;
    box-sizing: border-box;
    position: relative;
    background: linear-gradient(90deg, #2f9dc8 0, #2e9ac5 55%, #22bce3 72%, #22bde5 88%, #35a2ca 100%);
    border-radius: 12px 12px 0 0;
}

.slot {
    width: 64px;
    height: 52px;
    margin-top: 12px;
    flex: none;
    display: flex;
    align-items: center;
    justify-content: center;
    position: relative;
}

.is-running::after {
    content: "";
    position: absolute;
    left: 29px;
    top: 60px;
    width: 6px;
    height: 6px;
    border-radius: 50%;
    background: #0b2a4a;
}

.slot-doc::after {
    content: "";
    position: absolute;
    left: 3px;
    top: 60px;
    width: 58px;
    height: 5px;
    border: 1px solid #0b2a6a;
    border-radius: 3px;
    background: #0a4d8c;
}

.slot-trash {
    margin-left: -2px;
}

.badge {
    position: absolute;
    left: 38px;
    top: -6px;
    width: 22px;
    height: 22px;
    border-radius: 50%;
    background: #e8383f;
    color: #fff;
    font-size: 15px;
    line-height: 22px;
    text-align: center;
}

.dock-sep {
    width: 2px;
    height: 58px;
    margin: 12px 11px 0 14px;
    flex: none;
    background: #1a6f92;
}

.cal-month {
    font: 11px "Liberation Sans", Arial, sans-serif;
    fill: #fff;
}

.cal-day {
    font: 28px "Liberation Sans", Arial, sans-serif;
    fill: #222;
}

.term-text {
    font: bold 15px "Liberation Mono", monospace;
    fill: #fff;
}

.warn-text {
    font: bold 14px "Liberation Mono", monospace;
    fill: #d8a72a;
    letter-spacing: -1px;
}

.thumb {
    position: relative;
    flex: none;
    box-sizing: border-box;
}

.thumb-win {
    width: 60px;
    height: 40px;
    border: 3px solid #a9a9a9;
    background: linear-gradient(155deg, #fbfbfb 62%, #e6e6e6 62%);
}

.thumb-sky {
    background: linear-gradient(#f2f2f2 15%, #a9c8ec 15%, #c5d9f2 80%, #e4e4e4 80%);
}

.thumb-lilac {
    height: 42px;
    background: repeating-linear-gradient(#e6e6e6 0 1px, #fff 1px 3px) top / 100% 55% no-repeat, repeating-linear-gradient(#bda8e8 0 1px, #dff0c8 1px 3px);
}

.thumb-blue {
    background: linear-gradient(#fdfdfd 72%, #a5c4e8 72%, #a5c4e8 88%, #e4e4e4 88%);
}

.thumb-doc {
    width: 56px;
    height: 38px;
    background: repeating-linear-gradient(#fff 0 3px, #eef1f3 3px 5px);
}

.thumb-tall {
    height: 46px;
}

.thumb-short {
    height: 32px;
}

.thumb-text {
    background: repeating-linear-gradient(#fff 0 1px, #c9c9c9 1px 2px, #fff 2px 3px);
}

.thumb-swatches {
    background: radial-gradient(circle, #3a6fbf 2px, transparent 3px) 0 0 / 11px 10px, #fff;
}

.thumb-notes {
    background: linear-gradient(90deg, #f4f4f4 25%, #fff 25%);
}

.thumb-note {
    position: absolute;
    right: 4px;
    top: 26px;
    width: 18px;
    height: 20px;
    background: #fbfbf2;
    border-top: 4px solid #f3cf4a;
    box-sizing: border-box;
    transform: rotate(-8deg);
}

.thumb-badge {
    position: absolute;
    right: -1px;
    bottom: -9px;
}
```
